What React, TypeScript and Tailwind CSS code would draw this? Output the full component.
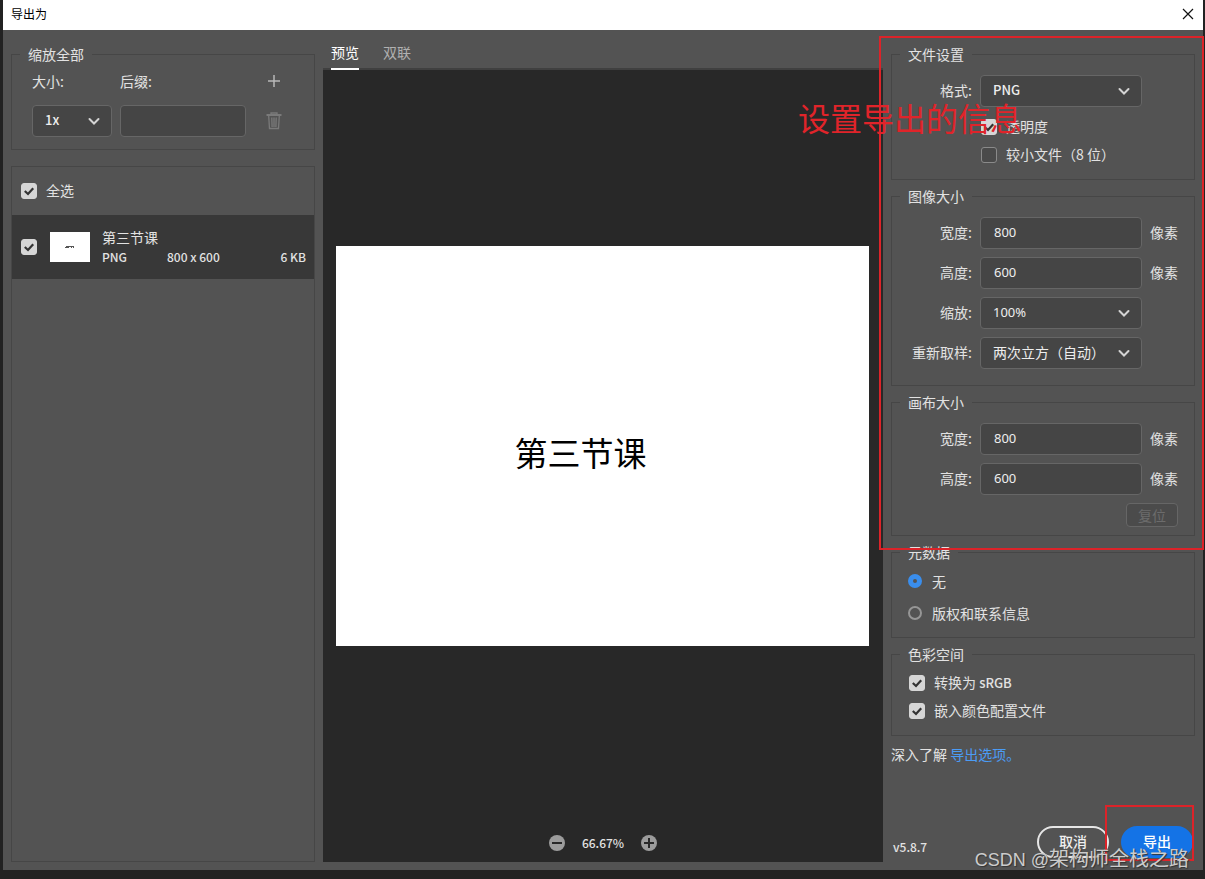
import React, { useState } from 'react';

const inputStyle =
  'h-8 min-w-0 rounded border border-[#666666] bg-[#454545] px-[13px] pb-0.5 font-["Noto_Sans","Noto_Sans_CJK_SC",sans-serif] text-[13px] text-[#eeeeee] outline-none';

interface GroupProps {
  title: string;
  className?: string;
  children: React.ReactNode;
}

const Group: React.FC<GroupProps> = ({ title, className = '', children }) => (
  <fieldset className="min-w-0 border border-[#464646]">
    <legend className="ml-2 px-2 leading-4">{title}</legend>
    <div className={className}>{children}</div>
  </fieldset>
);

interface CheckboxProps {
  id: string;
  label?: React.ReactNode;
  ariaLabel?: string;
  initial?: boolean;
}

const Checkbox: React.FC<CheckboxProps> = ({ id, label, ariaLabel, initial = false }) => {
  const [checked, setChecked] = useState(initial);

  return (
    <div className="flex h-7 items-center gap-[9px]">
      <span className="relative flex">
        <input
          id={id}
          type="checkbox"
          aria-label={ariaLabel}
          checked={checked}
          onChange={(e) => setChecked(e.target.checked)}
          className="h-4 w-4 appearance-none rounded-[3px] border border-[#8a8a8a] bg-[#4a4a4a] checked:border-[#d6d6d6] checked:bg-[#d6d6d6]"
        />
        {checked && (
          <svg viewBox="0 0 16 16" className="pointer-events-none absolute inset-0 h-4 w-4">
            <path d="M3.800 8 7 11l5.200-5.800" fill="none" stroke="#333333" strokeWidth="2.200" />
          </svg>
        )}
      </span>
      {label && (
        <label htmlFor={id} className="pb-0.5">
          {label}
        </label>
      )}
    </div>
  );
};

interface SelectProps {
  id: string;
  options: string[];
  className?: string;
}

const Select: React.FC<SelectProps> = ({ id, options, className = '' }) => (
  <div className={`relative flex ${className}`}>
    <select
      id={id}
      className="h-8 w-full appearance-none rounded border border-[#666666] bg-[#454545] pb-0.5 pl-3 pr-8 text-[#eeeeee] outline-none"
    >
      {options.map((option) => (
        <option key={option}>{option}</option>
      ))}
    </select>
    <svg viewBox="0 0 12 8" className="pointer-events-none absolute right-3 top-3 h-2 w-3">
      <path d="M1.500 2 6 6.500l4.500-4.500" fill="none" stroke="#d4d4d4" strokeWidth="2" strokeLinecap="round" />
    </svg>
  </div>
);

interface RowProps {
  id: string;
  label: string;
  unit?: string;
  children: React.ReactNode;
}

const Row: React.FC<RowProps> = ({ id, label, unit, children }) => (
  <div className="flex items-center gap-2">
    <label htmlFor={id} className="w-20 pb-0.5 text-right">
      {label}
    </label>
    {children}
    {unit && <span className="pb-0.5">{unit}</span>}
  </div>
);

const Radio: React.FC<{ id: string; label: string; initial?: boolean }> = ({ id, label, initial }) => (
  <div className="flex h-8 items-center gap-[10px]">
    <input
      id={id}
      type="radio"
      name="metadata"
      defaultChecked={initial}
      className="h-[14px] w-[14px] appearance-none rounded-full border-2 border-[#969696] checked:border-[5px] checked:border-[#3a8eed]"
    />
    <label htmlFor={id}>{label}</label>
  </div>
);

const ScalePanel: React.FC = () => (
  <Group title="缩放全部" className="pb-3 pl-5 pt-[9px]">
    <div className="flex h-[22px] items-center pb-0.5">
      <label htmlFor="size" className="w-[88px]">
        大小:
      </label>
      <label htmlFor="suffix" className="w-[146px]">
        后缀:
      </label>
      <button type="button" aria-label="添加" className="h-4 w-4">
        <svg viewBox="0 0 16 16" className="h-4 w-4">
          <path d="M8 2v12M2 8h12" stroke="#b8b8b8" strokeWidth="1.500" />
        </svg>
      </button>
    </div>
    <div className="mt-3 flex items-center gap-2">
      <Select id="size" options={['1x', '2x', '3x']} className="w-20 pl-0 text-[13px] font-medium" />
      <input id="suffix" type="text" className={`${inputStyle} w-[126px]`} />
      <button type="button" disabled aria-label="删除" className="ml-3 h-[18px] w-4">
        <svg viewBox="0 0 16 18" className="h-[18px] w-4" fill="none" stroke="#7a7a7a">
          <path d="M.5 3h15" strokeWidth="2" />
          <path d="M5 2.500V1h6v1.500M2.700 4l.8 12.500h9L13.300 4M5.800 5.500l.3 9.500M8 5.500V15M10.200 5.500 9.900 15" strokeWidth="1.300" />
        </svg>
      </button>
    </div>
  </Group>
);

const FileList: React.FC = () => (
  <div className="mt-4 flex-1 border border-[#464646]">
    <div className="flex h-12 items-center pl-[9px]">
      <Checkbox id="all" label="全选" initial />
    </div>
    <div className="flex h-16 items-center bg-[#383838] pl-[9px] pr-2">
      <Checkbox id="item" ariaLabel="第三节课" initial />
      <div className="ml-[13px] flex h-[30px] w-10 items-center justify-center bg-white">
        <svg viewBox="0 0 10 4" className="h-1 w-[10px]">
          <path d="M0 2.500h4M1 1.500h8M6 2.500h1M8 2.500h1" stroke="#555555" strokeWidth="1" />
        </svg>
      </div>
      <div className="ml-3 flex-1">
        <p className="leading-5">第三节课</p>
        <div className="flex text-[12px] font-medium leading-5">
          <span className="w-[65px]">PNG</span>
          <span>800 x 600</span>
          <span className="ml-auto">6 KB</span>
        </div>
      </div>
    </div>
  </div>
);

const Preview: React.FC = () => (
  <main className="flex min-w-0 flex-1 flex-col">
    <div className="flex h-10 gap-6 border-b-2 border-[#404040] pl-2">
      <button type="button" className="-mb-0.5 border-b-2 border-white pt-[6px] text-white">
        预览
      </button>
      <button type="button" className="-mb-0.5 border-b-2 border-transparent pt-[6px] text-[#b0b0b0]">
        双联
      </button>
    </div>
    <div className="flex flex-1 flex-col bg-[#282828]">
      <div className="flex flex-1 items-center pl-[13px] pr-[14px]">
        <div className="flex aspect-[4/3] w-full items-center justify-center bg-white pb-0 pr-11 pt-3 text-[33px] text-black">
          第三节课
        </div>
      </div>
      <div className="flex h-10 items-center justify-center gap-[17px] pt-0.5 text-[12px] font-medium">
        <button type="button" aria-label="缩小">
          <svg viewBox="0 0 16 16" className="h-4 w-4">
            <circle cx="8" cy="8" r="8" fill="#9c9c9c" />
            <path d="M3 8h10" stroke="#282828" strokeWidth="2" />
          </svg>
        </button>
        <span>66.67%</span>
        <button type="button" aria-label="放大">
          <svg viewBox="0 0 16 16" className="h-4 w-4">
            <circle cx="8" cy="8" r="8" fill="#9c9c9c" />
            <path d="M3 8h10M8 3v10" stroke="#282828" strokeWidth="2" />
          </svg>
        </button>
      </div>
    </div>
  </main>
);

const Settings: React.FC = () => (
  <aside className="flex w-[304px] flex-col gap-2 pt-4">
    <Group title="文件设置" className="pb-[10px] pt-[13px]">
      <Row id="format" label="格式:">
        <Select id="format" options={['PNG', 'JPG', 'GIF']} className="w-[162px] text-[13px] font-medium" />
      </Row>
      <div className="mt-[6px] pl-[89px]">
        <Checkbox id="alpha" label="透明度" initial />
        <Checkbox id="small" label="较小文件（8 位）" />
      </div>
    </Group>

    <Group title="图像大小" className="pb-4 pt-[13px]">
      <div className="flex flex-col gap-2">
        <Row id="image-width" label="宽度:" unit="像素">
          <input id="image-width" type="text" defaultValue="800" className={`${inputStyle} w-[162px]`} />
        </Row>
        <Row id="image-height" label="高度:" unit="像素">
          <input id="image-height" type="text" defaultValue="600" className={`${inputStyle} w-[162px]`} />
        </Row>
        <Row id="scale" label="缩放:">
          <Select
            id="scale"
            options={['100%', '50%', '200%']}
            className='w-[162px] font-["Noto_Sans","Noto_Sans_CJK_SC",sans-serif] text-[13px]'
          />
        </Row>
        <Row id="resample" label="重新取样:">
          <Select id="resample" options={['两次立方（自动）', '两次线性']} className="w-[162px]" />
        </Row>
      </div>
    </Group>

    <Group title="画布大小" className="pb-2 pt-[13px]">
      <div className="flex flex-col gap-2">
        <Row id="canvas-width" label="宽度:" unit="像素">
          <input id="canvas-width" type="text" defaultValue="800" className={`${inputStyle} w-[162px]`} />
        </Row>
        <Row id="canvas-height" label="高度:" unit="像素">
          <input id="canvas-height" type="text" defaultValue="600" className={`${inputStyle} w-[162px]`} />
        </Row>
        <button
          type="button"
          disabled
          className="mr-4 h-6 w-[52px] self-end rounded border border-[#666666] bg-[#4b4b4b] text-[#6c6c6c]"
        >
          复位
        </button>
      </div>
    </Group>

    <Group title="元数据" className="pb-2 pl-4 pt-[5px]">
      <Radio id="meta-none" label="无" initial />
      <Radio id="meta-copyright" label="版权和联系信息" />
    </Group>

    <Group title="色彩空间" className="pb-[10px] pl-[17px] pt-[7px]">
      <Checkbox
        id="srgb"
        label={
          <>
            转换为 <span className="text-[13px] font-medium">sRGB</span>
          </>
        }
        initial
      />
      <Checkbox id="profile" label="嵌入颜色配置文件" initial />
    </Group>

    <p className="leading-5">
      深入了解{' '}
      <a href="#export-options" className="text-[#4b9cf5]">
        导出选项。
      </a>
    </p>

    <div className="mt-auto flex items-center pb-1 pr-0.5">
      <span className="mr-auto pl-0.5 pt-[10px] text-[12px] font-medium">v5.8.7</span>
      <button
        type="button"
        className="h-8 w-[72px] rounded-full border-2 border-[#e6e6e6] pb-0.5 font-medium text-[#f0f0f0]"
      >
        取消
      </button>
      <button type="button" className="ml-3 h-8 w-[72px] rounded-full bg-[#1473e6] pb-0.5 font-medium text-white">
        导出
      </button>
    </div>
  </aside>
);

const App: React.FC = () => {
  return (
    <div className='relative flex min-h-screen flex-col bg-[#222222] pb-[9px] pl-[3px] pr-0.5 font-["Noto_Sans_CJK_SC",sans-serif] text-[14px] leading-5 text-[#e2e2e2]'>
      <header className="flex h-[30px] items-center justify-between bg-white pb-0.5 pl-2 pr-[9px] text-[12px] text-black">
        <h1>导出为</h1>
        <button type="button" aria-label="关闭">
          <svg viewBox="0 0 12 12" className="h-3 w-3">
            <path d="M1 1l10 10M11 1 1 11" stroke="#111111" strokeWidth="1.200" />
          </svg>
        </button>
      </header>

      <div className="flex flex-1 gap-2 bg-[#535353] px-2 pb-2">
        <aside className="flex w-[304px] flex-col pt-4">
          <ScalePanel />
          <FileList />
        </aside>
        <Preview />
        <Settings />
      </div>

      {/* Annotations */}
      <div className="pointer-events-none absolute right-px top-[36px] h-[514px] w-[325px] border-2 border-[#dc2329]" />
      <p className="pointer-events-none absolute right-[183px] top-[97px] text-[32px] leading-10 text-[#e0242a]">
        设置导出的信息
      </p>
      <div className="pointer-events-none absolute bottom-[18px] right-[11px] h-14 w-[89px] border-2 border-[#dc2329]" />

      {/* Watermark */}
      <p className="pointer-events-none absolute bottom-[7px] right-4 text-[20px] leading-6 text-[#cccccc] [text-shadow:1px_1px_1px_#333333]">
        <span className='font-["Liberation_Sans",sans-serif] text-[18px]'>CSDN @</span>
        架构师全栈之路
      </p>
    </div>
  );
};

export default App;
